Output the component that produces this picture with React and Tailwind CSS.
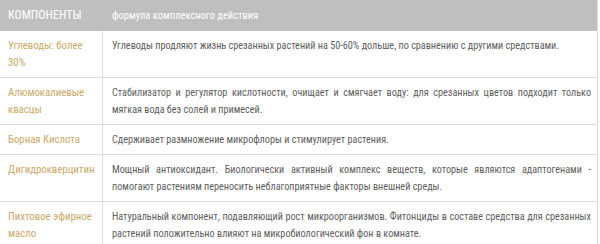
import React from 'react'

const rows = [
  {
    name: 'Углеводы: более 30%',
    text: 'Углеводы продляют жизнь срезанных растений на 50-60% дольше, по сравнению с другими средствами.',
  },
  {
    name: 'Алюмокалиевые квасцы',
    text: 'Стабилизатор и регулятор кислотности, очищает и смягчает воду: для срезанных цветов подходит только мягкая вода без солей и примесей.',
  },
  {
    name: 'Борная Кислота',
    text: 'Сдерживает размножение микрофлоры и стимулирует растения.',
  },
  {
    name: 'Дигидрокверцитин',
    text: 'Мощный антиоксидант. Биологически активный комплекс веществ, которые являются адаптогенами - помогают растениям переносить неблагоприятные факторы внешней среды.',
  },
  {
    name: 'Пихтовое эфирное масло',
    text: 'Натуральный компонент, подавляющий рост микроорганизмов. Фитонциды в составе средства для срезанных растений положительно влияют на микробиологический фон в комнате.',
  },
]

export default function App() {
  return (
    <div className="w-[600px] h-[244px] overflow-hidden bg-white font-['Roboto_Condensed','Liberation_Sans_Narrow','Roboto',sans-serif] text-[10.2px] leading-[17px]">
      <div className="w-[598px] border-r border-[#dcdcdc]">
        {/* header */}
        <div className="grid grid-cols-[103px_1fr] bg-[#bfbfbf] text-white h-[31px] items-center">
          <div className="pl-2 text-[12px]">КОМПОНЕНТЫ</div>
          <div className="pl-[9px] text-[10.5px]">формула комплексного действия</div>
        </div>
        {rows.map((r) => (
          <div key={r.name} className="grid grid-cols-[103px_1fr] border-b border-[#dcdcdc]">
            <div className="border-r border-[#dcdcdc] pl-2 pr-2 py-1.5 text-[10.8px] text-[#caa967]">{r.name}</div>
            <div className="pl-[9px] pr-[6px] py-1.5 text-[#5e5e5e] text-justify">{r.text}</div>
          </div>
        ))}
      </div>
    </div>
  )
}
